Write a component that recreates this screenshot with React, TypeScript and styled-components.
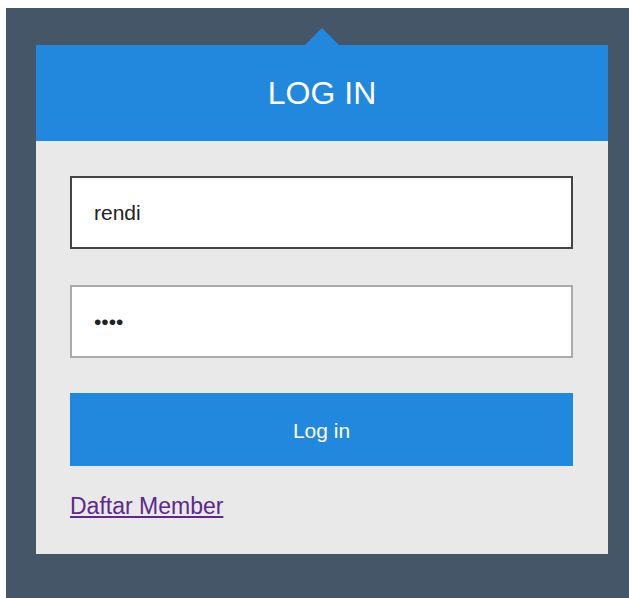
import React, {useState} from 'react';
import styled, {createGlobalStyle} from 'styled-components'

const GlobalStyle = createGlobalStyle`
  html, body {
    margin: 0;
    padding: 0;
    background: #ffffff;
  }
  body {
    padding: 8px 0 0 6px;
    font-family: "Liberation Sans", Arial, sans-serif;
  }
`

const Backdrop = styled.section`
  min-height: 590px;
  box-sizing: border-box;
  padding: 37px 21px 44px 30px;
  background-color: #455668;
`

const Card = styled.div`
  position: relative;
  width: 572px;
  background-color: #e9e9e9;
`

// little pointer sitting on top of the header
const Pointer = styled.span`
  position: absolute;
  top: -17px;
  left: 269px;
  width: 0;
  height: 0;
  border-left: 17px solid transparent;
  border-right: 17px solid transparent;
  border-bottom: 17px solid #2288dd;
`

const Header = styled.header`
  display: flex;
  align-items: center;
  justify-content: center;
  height: 96px;
  background-color: #2288dd;
`

const Title = styled.h1`
  margin: 0;
  font-size: 32px;
  font-weight: normal;
  color: #ffffff;
`

const Form = styled.form`
  display: flex;
  flex-direction: column;
  padding: 35px 34px 34px;
`

const Field = styled.input<{dark?: boolean}>`
  box-sizing: border-box;
  width: 503px;
  height: 73px;
  margin-bottom: ${props => props.dark ? '36px' : '35px'};
  padding: 0 22px;
  border: 2px solid ${props => props.dark ? '#444444' : '#aaaaaa'};
  background: #ffffff;
  font-family: "Liberation Sans", Arial, sans-serif;
  font-size: 21px;
  color: #222222;
  caret-color: #444444;
  outline: none;
`

const Submit = styled.button`
  width: 503px;
  height: 73px;
  padding: 3px 0 0;
  border: none;
  background-color: #2288dd;
  color: #ffffff;
  font-family: "Liberation Sans", Arial, sans-serif;
  font-size: 21px;
  cursor: pointer;
`

const MemberLink = styled.a`
  align-self: flex-start;
  margin-top: 27px;
  font-size: 23px;
  color: #5b2a8c;
  text-decoration: underline;
`

const App = () => {
    const [user, setUser] = useState('rendi')
    const [pass, setPass] = useState('1234')

    return (
        <>
            <GlobalStyle/>
            <Backdrop>
                <Card>
                    <Pointer/>
                    <Header>
                        <Title>LOG IN</Title>
                    </Header>
                    <Form onSubmit={e => e.preventDefault()}>
                        <Field dark value={user} onChange={e => setUser(e.target.value)}/>
                        <Field type="password" autoFocus value={pass} onChange={e => setPass(e.target.value)}/>
                        <Submit type="submit">Log in</Submit>
                        <MemberLink href="#daftar">Daftar Member</MemberLink>
                    </Form>
                </Card>
            </Backdrop>
        </>
    );
}

export default App;
